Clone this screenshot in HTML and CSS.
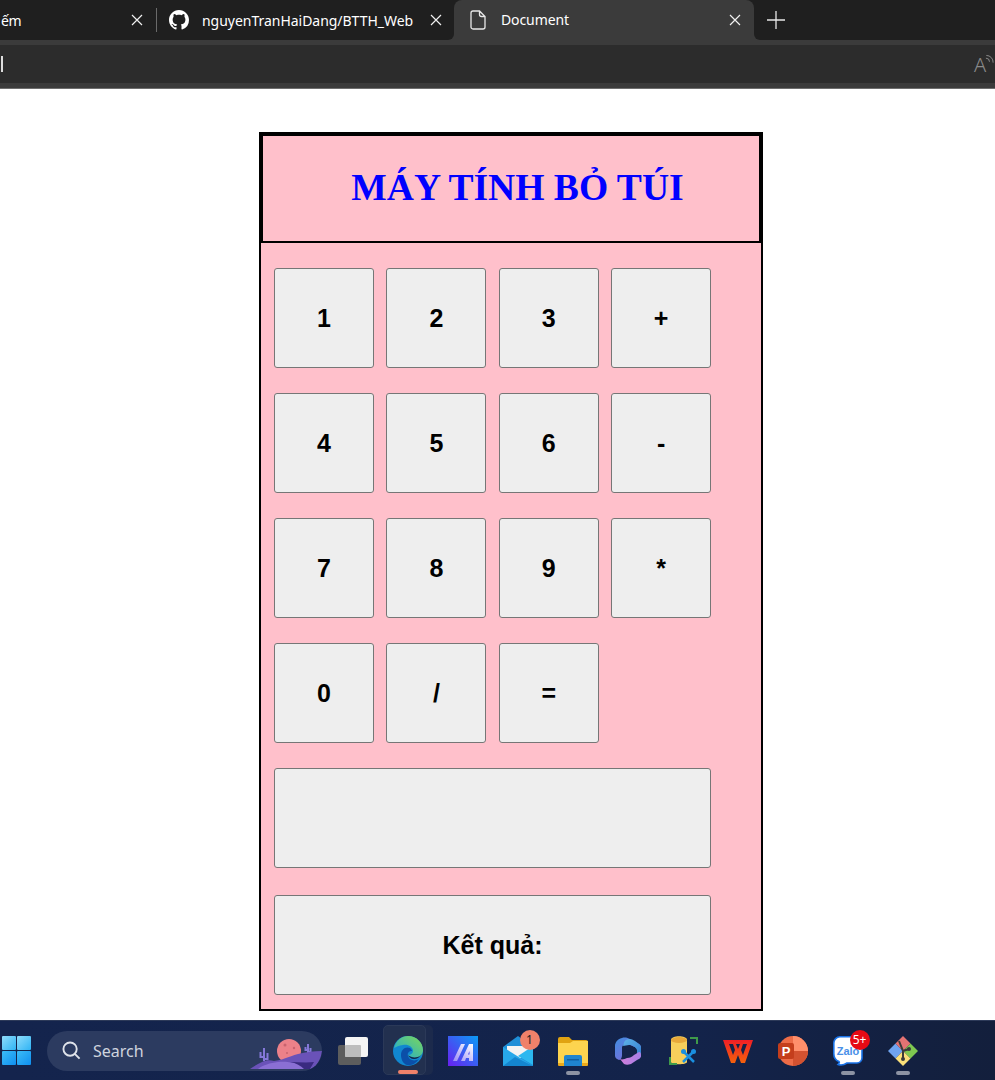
FILE: index.html
```html
<!DOCTYPE html>
<html lang="vi">
<head>
  <meta charset="UTF-8">
  <title>Document</title>
  <link rel="stylesheet" href="styles.css">
</head>
<body>

  <!-- browser chrome -->
  <header class="chrome">
    <div class="tabstrip">
      <div class="tabs-left">
        <div class="tab tab-cut">
          <span class="tab-title">ếm</span>
          <svg class="tab-close" viewBox="0 0 12 12"><path d="M1 1l10 10M11 1L1 11"/></svg>
        </div>
        <div class="tab tab-github">
          <svg class="tab-icon-github" viewBox="0 0 16 16"><path fill-rule="evenodd" d="M8 0C3.58 0 0 3.58 0 8c0 3.54 2.29 6.53 5.47 7.59.4.07.55-.17.55-.38 0-.19-.01-.82-.01-1.49-2.01.37-2.53-.49-2.69-.94-.09-.23-.48-.94-.82-1.13-.28-.15-.68-.52-.01-.53.63-.01 1.08.58 1.23.82.72 1.21 1.87.87 2.33.66.07-.52.28-.87.51-1.07-1.78-.2-3.64-.89-3.64-3.95 0-.87.31-1.59.82-2.15-.08-.2-.36-1.02.08-2.12 0 0 .67-.21 2.2.82.64-.18 1.32-.27 2-.27s1.36.09 2 .27c1.53-1.04 2.2-.82 2.2-.82.44 1.1.16 1.92.08 2.12.51.56.82 1.27.82 2.15 0 3.07-1.87 3.75-3.65 3.95.29.25.54.73.54 1.48 0 1.07-.01 1.93-.01 2.2 0 .21.15.46.55.38A8.01 8.01 0 0 0 16 8c0-4.42-3.58-8-8-8z"/></svg>
          <span class="tab-title">nguyenTranHaiDang/BTTH_Web</span>
          <svg class="tab-close" viewBox="0 0 12 12"><path d="M1 1l10 10M11 1L1 11"/></svg>
        </div>
      </div>
      <div class="tab tab-active">
        <svg class="tab-icon-file" viewBox="0 0 16 20"><path d="M3 1h6.500L15 6.500V17a2 2 0 0 1-2 2H3a2 2 0 0 1-2-2V3a2 2 0 0 1 2-2zM9.500 1v3.500a2 2 0 0 0 2 2H15"/></svg>
        <span class="tab-title">Document</span>
        <svg class="tab-close" viewBox="0 0 12 12"><path d="M1 1l10 10M11 1L1 11"/></svg>
      </div>
      <div class="tabs-right">
        <svg class="tab-new" viewBox="0 0 18 18"><path d="M9 0v18M0 9h18"/></svg>
      </div>
    </div>
    <div class="toolbar">
      <span class="caret"></span>
      <div class="read-aloud">
        <span class="read-a">A</span>
        <svg class="read-waves" viewBox="0 0 10 12"><path d="M1 4.500a4 4 0 0 1 4 4M1.500 1.500a7.500 7.500 0 0 1 7.500 8"/></svg>
      </div>
    </div>
  </header>

  <main class="page">
    <div class="calc">
      <h1 class="calc-title">MÁY TÍNH BỎ TÚI</h1>
      <form class="keys">
        <button type="button" class="key">1</button>
        <button type="button" class="key">2</button>
        <button type="button" class="key">3</button>
        <button type="button" class="key">+</button>
        <button type="button" class="key">4</button>
        <button type="button" class="key">5</button>
        <button type="button" class="key">6</button>
        <button type="button" class="key">-</button>
        <button type="button" class="key">7</button>
        <button type="button" class="key">8</button>
        <button type="button" class="key">9</button>
        <button type="button" class="key">*</button>
        <button type="button" class="key">0</button>
        <button type="button" class="key">/</button>
        <button type="button" class="key key-eq">=</button>
        <input type="text" class="key key-wide" aria-label="Phép tính">
        <button type="button" class="key key-wide key-result">Kết quả:</button>
      </form>
    </div>
  </main>

  <!-- windows taskbar -->
  <footer class="taskbar">
    <svg class="start" viewBox="0 0 29 29">
      <defs>
        <linearGradient id="winA" x1="0" y1="0" x2="1" y2="1"><stop offset="0" stop-color="#8fdcfb"/><stop offset="1" stop-color="#2fb4f5"/></linearGradient>
        <linearGradient id="winB" x1="0" y1="0" x2="1" y2="1"><stop offset="0" stop-color="#3cbcf7"/><stop offset="1" stop-color="#0f8ff0"/></linearGradient>
      </defs>
      <rect width="14" height="14" rx="1" fill="url(#winA)"/>
      <rect x="15" width="14" height="14" rx="1" fill="url(#winA)"/>
      <rect y="15" width="14" height="14" rx="1" fill="url(#winB)"/>
      <rect x="15" y="15" width="14" height="14" rx="1" fill="url(#winB)"/>
    </svg>

    <div class="search">
      <svg class="search-icon" viewBox="0 0 20 20"><circle cx="8.500" cy="8.500" r="7"/><path d="M13.500 13.500l5 5"/></svg>
      <span class="search-text">Search</span>
      <svg class="search-art" viewBox="0 0 72 40">
        <circle cx="39" cy="20" r="12" fill="#ec8189"/>
        <circle cx="35" cy="14" r="1.500" fill="#c9636e"/>
        <circle cx="44" cy="17" r="1.200" fill="#c9636e"/>
        <circle cx="37" cy="22" r="1" fill="#c9636e"/>
        <path d="M14 17v13M14 26h-3.500v-5M14 28h3.500v-6M58 13v10M58 19h-2.500v-3M58 21h2.500v-4" stroke="#8478d8" stroke-width="2" fill="none"/>
        <path d="M0 38c4-3 8-5 12-7 4-2 8-2 12-1 8-1 14-4 24-7 8-2 16-3 24-3-1 8-6 18-14 18z" fill="#6a52b8"/>
        <path d="M8 38c5-4 12-6 20-7 8-1 22 1 34 6l-4 1z" fill="#8a6fd4"/>
        <path d="M40 31c8 0 16 1 24 0l-4 7h-6c-3-3-8-6-14-7z" fill="#3a2a80"/>
      </svg>
    </div>

    <div class="apps">
      <div class="app">
        <svg class="app-icon" viewBox="0 0 30 30">
          <rect y="9" width="23" height="20" rx="2" fill="#5d5d5d"/>
          <rect x="7" y="1" width="23" height="20" rx="2" fill="#f4f4f4"/>
          <rect x="7" y="9" width="16" height="12" rx="1" fill="#bdbdbd"/>
        </svg>
      </div>
      <div class="app app-active">
        <span class="app-stack"></span>
        <span class="app-tile"></span>
        <svg class="app-icon" viewBox="0 0 30 30">
          <defs>
            <linearGradient id="edgeGreen" x1="0" y1="1" x2="1" y2="0"><stop offset="0" stop-color="#1ba6d8"/><stop offset="1" stop-color="#7ed957"/></linearGradient>
          </defs>
          <circle cx="15" cy="15" r="15" fill="#1187d0"/>
          <path d="M1 12C3 4 9 0 15 0c9 0 15 7 15 14 0 5-4 8-8 8-3 0-6-1-7-3 3 0 5-2 5-4 0-4-5-7-10-6-4 .5-7 2-9 3z" fill="url(#edgeGreen)"/>
          <path d="M8 19c0-5 4-9 9-7 1 1 2 2 2 3-3 0-5 2-4 5 1 4 6 6 11 3-3 4-7 7-12 6-4-1-6-6-6-10z" fill="#0b4fa8"/>
          <path d="M15 19c3 3 9 3 12 1l2-2c-2 3-5 5-8 5-3 0-5-2-6-4z" fill="#14244a"/>
        </svg>
      </div>
      <div class="app">
        <svg class="app-icon" viewBox="0 0 30 30">
          <defs>
            <linearGradient id="maBg" x1="0" y1="1" x2="1" y2="0"><stop offset="0" stop-color="#6a1ff0"/><stop offset="1" stop-color="#0a9cf5"/></linearGradient>
            <linearGradient id="maFg" x1="0" y1="1" x2="1" y2="0"><stop offset="0" stop-color="#9a8cf5"/><stop offset="1" stop-color="#ffffff"/></linearGradient>
          </defs>
          <rect width="30" height="30" fill="url(#maBg)"/>
          <path d="M5 25L13 8h4L9 25zM13 25L21 8h4v17h-4v-3h-3l-1 3z" fill="url(#maFg)"/>
          <path d="M20 18.500h1.500V15z" fill="#4a4cf0"/>
        </svg>
      </div>
      <div class="app">
        <svg class="app-icon" viewBox="0 0 30 30">
          <path d="M0 11L15 0l15 11v19H0z" fill="#1f8fd8"/>
          <path d="M4 10h22v9L15 23 4 16z" fill="#f3f3f3"/>
          <path d="M15 20L30 10v19z" fill="#2cb8f0"/>
          <path d="M0 11l30 19H0z" fill="#27a8ea"/>
          <path d="M0 30l12-9 18 9z" fill="#1485cf"/>
        </svg>
        <span class="badge badge-mail">1</span>
      </div>
      <div class="app app-open">
        <svg class="app-icon" viewBox="0 0 30 30">
          <path d="M0 3a2 2 0 0 1 2-2h9l3 3h14a2 2 0 0 1 2 2v4H0z" fill="#e0a312"/>
          <path d="M0 7h12l3-2h15v24H0z" fill="#fdd44f"/>
          <path d="M0 27h30v2a1 1 0 0 1-1 1H1a1 1 0 0 1-1-1z" fill="#eba91a"/>
          <path d="M6 21a2 2 0 0 1 2-2h14a2 2 0 0 1 2 2v9H6z" fill="#1f84cf"/>
          <path d="M9 23h12v1.500H9z" fill="#0f5fa3"/>
        </svg>
      </div>
      <div class="app">
        <svg class="app-icon app-copilot" viewBox="0 0 26 28">
          <defs>
            <linearGradient id="cpA" x1="0" y1="0" x2="1" y2="1"><stop offset="0" stop-color="#3f8fe0"/><stop offset="1" stop-color="#8a5fd8"/></linearGradient>
            <linearGradient id="cpB" x1="0" y1="0" x2="1" y2="1"><stop offset="0" stop-color="#5fb4e8"/><stop offset="1" stop-color="#2f7ad0"/></linearGradient>
            <linearGradient id="cpC" x1="0" y1="0" x2="1" y2="0"><stop offset="0" stop-color="#d07fd8"/><stop offset="1" stop-color="#a87fe8"/></linearGradient>
          </defs>
          <path d="M7 1c3-1 6 0 8 1l9 5c1 1 2 2 2 3v9c0 1-2 2-4 1V11l-9-4c-3-1-5 1-6 3v8c0 2-1 5-3 5-2-1-4-2-4-4V9c0-3 2-7 7-8z" fill="url(#cpA)"/>
          <path d="M11 3c3-2 6-1 9 1l4 3c2 1 2 3 2 5v6c0 2-2 4-4 4V13c-1-3-5-5-8-5l-6 1c1-3 1-5 3-6z" fill="url(#cpB)"/>
          <path d="M5 22c2 1 5 0 7-1 3 0 5-1 7-3 2-1 3-2 5-3 2 0 2 2 2 4 0 2-2 3-4 4l-6 4c-3 1-5 1-7 0z" fill="url(#cpC)"/>
        </svg>
      </div>
      <div class="app">
        <svg class="app-icon" viewBox="0 0 30 30">
          <path d="M3 4c0-5 16-5 16 0v22c0 3-16 3-16 0z" fill="#f7cf5b"/>
          <ellipse cx="11" cy="4" rx="8" ry="3" fill="#e8a93a"/>
          <path d="M22 2h7v6M2 21v7h7" fill="none" stroke="#3f9a4a" stroke-width="2"/>
          <path d="M15 15l11 11M26 15L15 26" stroke="#1a8fe0" stroke-width="2.500" fill="none"/>
          <circle cx="15.500" cy="15.500" r="2.500" fill="#1a8fe0"/>
          <circle cx="25.500" cy="15.500" r="2.500" fill="#1a8fe0"/>
        </svg>
      </div>
      <div class="app">
        <svg class="app-icon" viewBox="0 0 30 30">
          <defs>
            <linearGradient id="wpsG" x1="0" y1="0" x2="0" y2="1"><stop offset="0" stop-color="#f01f26"/><stop offset="1" stop-color="#f4610c"/></linearGradient>
          </defs>
          <path fill-rule="evenodd" d="M0 4h30l-8 23h-4l-3-8-3 8H8zM6 8l4 11 2-5-2-6zM13 8l2 5 2-5zM20 8l-2 6 2 5 4-11z" fill="url(#wpsG)"/>
        </svg>
      </div>
      <div class="app">
        <svg class="app-icon" viewBox="0 0 30 30">
          <circle cx="15" cy="15" r="15" fill="#ed6c47"/>
          <path d="M15 0a15 15 0 0 1 15 15H15z" fill="#ff8f6b"/>
          <path d="M15 15h15a15 15 0 0 1-15 15z" fill="#d35230"/>
          <rect x="0" y="7" width="16" height="16" rx="2" fill="#c43e1c"/>
          <text class="ppt-letter" x="8" y="20">P</text>
        </svg>
      </div>
      <div class="app app-open">
        <svg class="app-icon" viewBox="0 0 30 30">
          <path d="M7 .800h16a6 6 0 0 1 6 6V22a5 5 0 0 1-5 5H14c-3 2-6 2.500-9 1.500 1-1 2-2 1-3-3-1-5.200-4-5.200-8V7a6.200 6.200 0 0 1 6.200-6.200z" fill="#fff" stroke="#1a73e8" stroke-width="1.600"/>
          <text class="zalo-letter" x="15" y="19">Zalo</text>
        </svg>
        <span class="badge badge-zalo">5+</span>
      </div>
      <div class="app app-open">
        <svg class="app-icon" viewBox="0 0 30 30">
          <path d="M15 15L7.500 7.500 0 15l7.500 7.500z" fill="#6fa3f0"/>
          <path d="M15 15l7.500-7.500L15 0 7.500 7.500z" fill="#e57373"/>
          <path d="M15 15l7.500 7.500L30 15l-7.500-7.500z" fill="#7ec850"/>
          <path d="M15 15l-7.500 7.500L15 30l7.500-7.500z" fill="#fbe07a"/>
          <path d="M11 5l4 10v9M15 15l6-2" stroke="#3a3a3a" stroke-width="2" fill="none"/>
          <circle cx="15" cy="23" r="2" fill="#3a3a3a"/>
          <circle cx="21" cy="13" r="2" fill="#3a3a3a"/>
        </svg>
      </div>
    </div>
  </footer>

</body>
</html>
```

FILE: styles.css
```css
* { box-sizing: border-box; }
html, body { height: 100%; }
body { margin: 0; height: 1080px; overflow: hidden; display: flex; flex-direction: column; background: #fff; font-family: "Liberation Sans", Arial, sans-serif; }

/* browser chrome */
.chrome { height: 89px; flex: none; background: #3b3b3b; border-bottom: 1px solid #6e6e6e; font-family: "Noto Sans", sans-serif; color: #fff; }
.tabstrip { display: flex; height: 45px; background: linear-gradient(#1f1f1f 0 20px, #3b3b3b 20px); }
.tabs-left { display: flex; width: 454px; height: 40px; background: #1f1f1f; border-bottom-right-radius: 6px; }
.tabs-right { flex: 1; height: 40px; background: #1f1f1f; border-bottom-left-radius: 6px; padding-left: 13px; display: flex; align-items: center; }
.tab { display: flex; align-items: center; height: 40px; font-size: 14px; }
.tab-cut { width: 156px; padding: 0 13px 0 1px; }
.tab-cut .tab-title { letter-spacing: -0.4px; }
.tab-github { width: 298px; padding: 0 12px 0 13px; }
.tab-github::before { content: ""; width: 1px; height: 24px; background: #6a6a6a; margin-left: -13px; margin-right: 12px; }
.tab-active { width: 300px; height: 45px; padding: 0 13px 6px 16px; background: #3b3b3b; border-radius: 8px 8px 0 0; }
.tab-title { white-space: nowrap; }
.tab-github .tab-title { margin-left: 13px; letter-spacing: -0.03px; }
.tab-active .tab-title { margin-left: 15px; letter-spacing: -0.1px; }
.tab-close { width: 12px; height: 12px; margin-left: auto; fill: none; stroke: #f0f0f0; stroke-width: 1.2; }
.tab-icon-github { width: 20px; height: 20px; fill: #fff; flex: none; }
.tab-icon-file { width: 16px; height: 20px; fill: none; stroke: #e8e8e8; stroke-width: 1.3; flex: none; }
.tab-new { width: 18px; height: 18px; fill: none; stroke: #e8e8e8; stroke-width: 1.3; margin-top: -1px; }
.toolbar { display: flex; justify-content: space-between; align-items: center; height: 38px; background: #2c2c2c; padding: 0 1px; }
.caret { width: 2px; height: 16px; background: #ddd; }
.read-aloud { display: flex; align-items: flex-start; width: 20px; height: 20px; color: #8a8a8a; }
.read-a { font-size: 20px; line-height: 20px; font-weight: 300; margin-top: 1px; }
.read-waves { width: 9px; height: 11px; margin-left: -1px; flex: none; fill: none; stroke: #8a8a8a; stroke-width: 1.1; }

/* calculator */
.page { flex: 1; padding: 43px 0 0 259px; }
.calc { width: 504px; background: #ffc0cb; border: 2px solid #000; }
.calc-title { margin: 0; height: 109px; border: 2px solid #000; padding: 29px 0 0 13px; font-family: "Liberation Serif", "Times New Roman", serif; font-size: 37.6px; line-height: 46px; font-weight: bold; color: #00f; text-align: center; }
.keys { display: grid; grid-template-columns: repeat(4, 100px); gap: 25px 12.4px; padding: 25px 0 14px 13px; }
.key { height: 100px; padding: 0; border: 1px solid #767676; border-radius: 3px; background: #eee; color: #000; font-family: "Liberation Sans", Arial, sans-serif; font-size: 25px; font-weight: bold; text-align: center; }
.key-eq { grid-column: 3; }
.key-wide { grid-column: 1 / -1; width: 437px; }
.key-result { margin-top: 2px; }

/* taskbar */
.taskbar { position: relative; display: flex; align-items: center; flex: none; height: 60px; padding-left: 2px; background: linear-gradient(90deg, #14244d, #13234a 70%, #131f3c); border-top: 1px solid #2d3a59; }
.start { width: 29px; height: 29px; flex: none; }
.search { position: relative; display: flex; align-items: center; width: 275px; height: 40px; margin-left: 16px; padding-left: 15px; border-radius: 20px; background: #2c3b60; overflow: hidden; font-family: "Noto Sans", sans-serif; }
.search-icon { width: 19px; height: 19px; fill: none; stroke: #dfe3ea; stroke-width: 2; }
.search-text { margin-left: 12px; font-size: 16px; color: #cfd4de; }
.search-art { position: absolute; right: 0; top: 0; width: 72px; height: 40px; }
.apps { display: flex; margin-left: 3.5px; }
.app { position: relative; display: flex; justify-content: center; align-items: center; width: 55px; height: 59px; }
.app-icon { position: relative; width: 30px; height: 30px; }
.app-copilot { width: 26px; height: 28px; }
.app-tile { position: absolute; left: 2px; top: 4px; width: 43px; height: 50px; background: #22304f; border: 1px solid #2b3958; border-radius: 5px; }
.app-stack { position: absolute; left: 12px; top: 4px; width: 40px; height: 50px; background: #1c2a4c; border-radius: 5px; }
.app-active::after { content: ""; position: absolute; left: 17px; top: 49px; width: 20px; height: 4px; border-radius: 2px; background: #f0816a; }
.app-open::after { content: ""; position: absolute; left: 20px; top: 50px; width: 14px; height: 4px; border-radius: 2px; background: #8d93a3; }
.badge { position: absolute; display: flex; justify-content: center; align-items: center; width: 20px; height: 20px; border-radius: 50%; font-family: "Noto Sans", sans-serif; font-size: 12px; line-height: 1; }
.badge-mail { left: 29px; top: 9px; background: #f0816a; color: #222; }
.badge-zalo { left: 29px; top: 9px; background: #e60a14; color: #fff; }
.ppt-letter { font-family: "Liberation Sans", Arial, sans-serif; font-size: 13px; font-weight: bold; fill: #fff; text-anchor: middle; }
.zalo-letter { font-family: "Liberation Sans", Arial, sans-serif; font-size: 11px; font-weight: bold; fill: #4a90e8; text-anchor: middle; }
```
